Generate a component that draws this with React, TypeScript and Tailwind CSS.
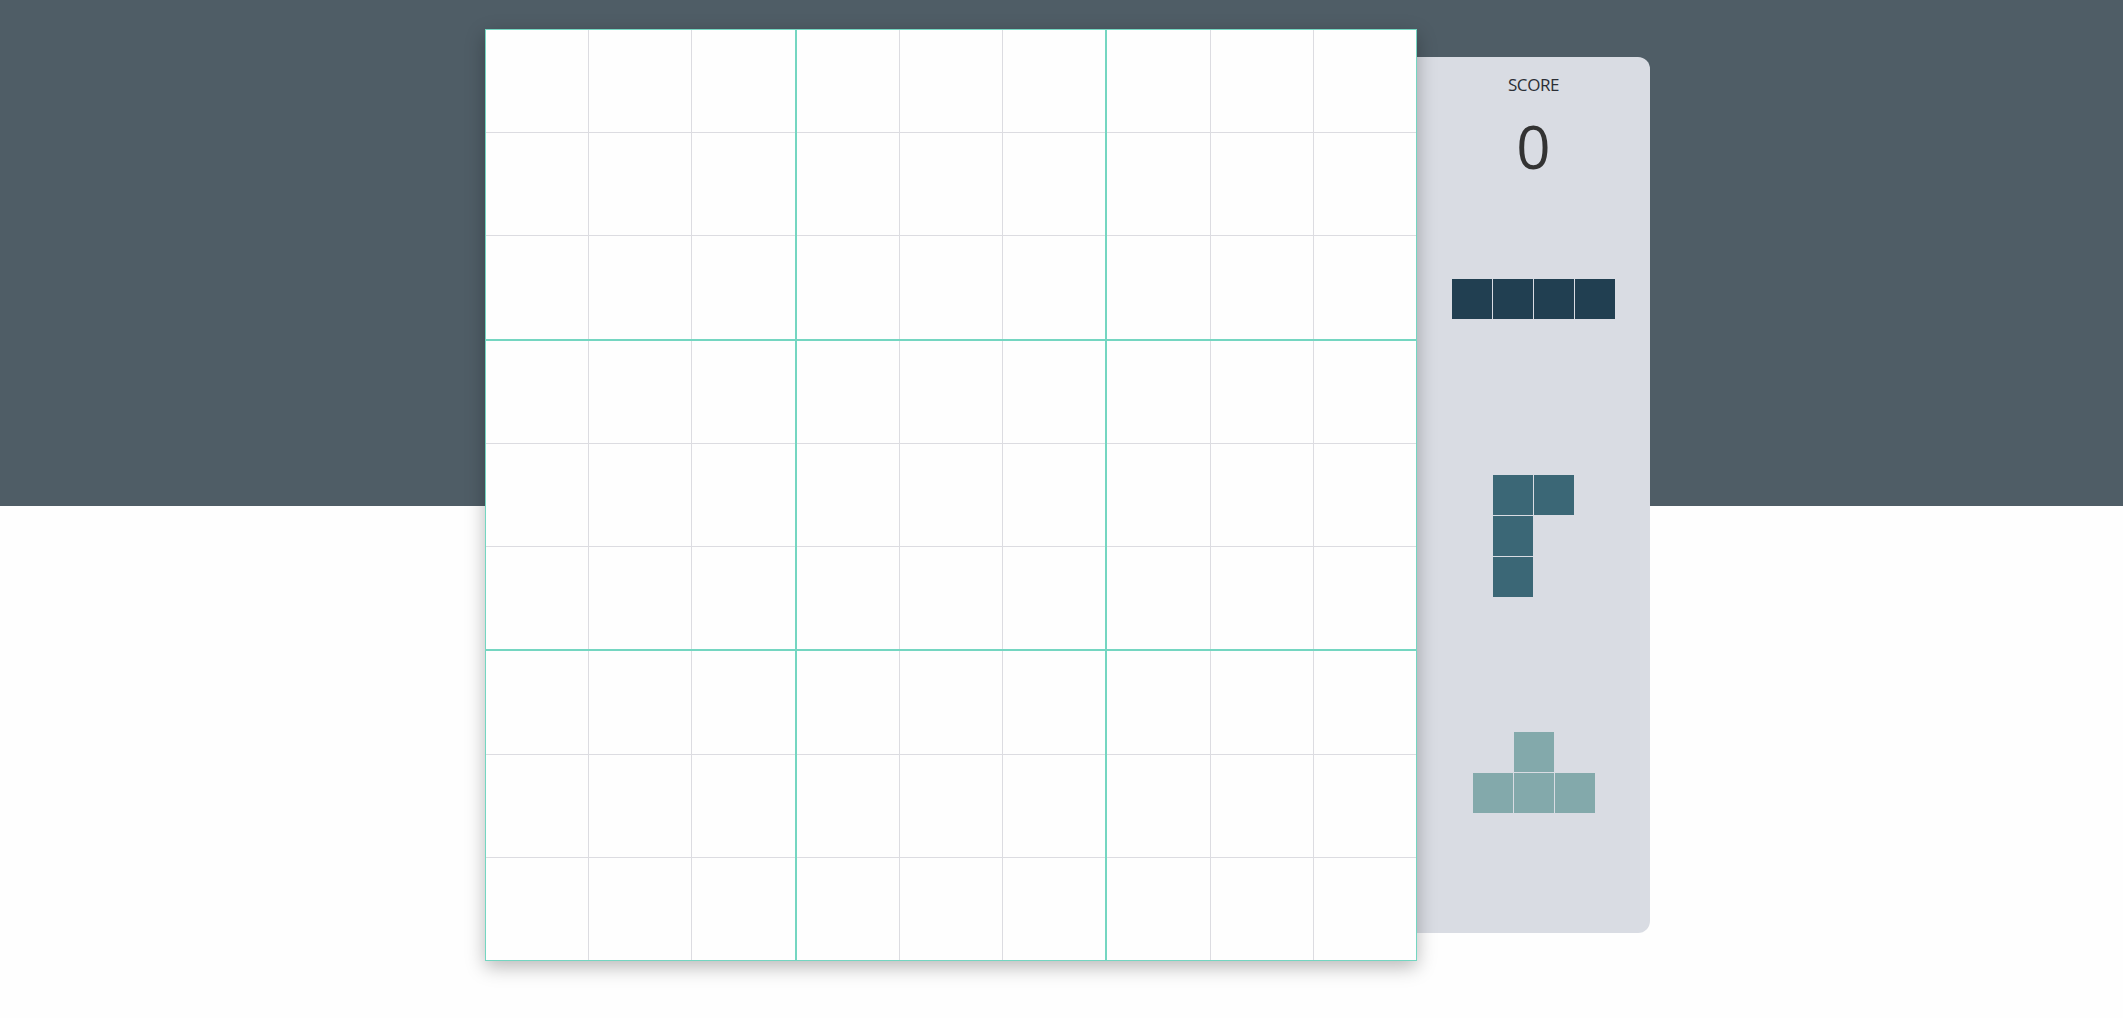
const boxes = [0, 1, 2, 3, 4, 5, 6, 7, 8];
const cells = [0, 1, 2, 3, 4, 5, 6, 7, 8];

type Shape = { color: string; rows: number[][] };

const pieces: Shape[] = [
  { color: "bg-[#213f51]", rows: [[1, 1, 1, 1]] },
  {
    color: "bg-[#3b6776]",
    rows: [
      [1, 1],
      [1, 0],
      [1, 0],
    ],
  },
  {
    color: "bg-[#83a9ab]",
    rows: [
      [0, 1, 0],
      [1, 1, 1],
    ],
  },
];

function Piece({ shape }: { shape: Shape }) {
  return (
    <div className="flex flex-col gap-[1px]">
      {shape.rows.map((row, r) => (
        <div key={r} className="flex gap-[1px]">
          {row.map((on, c) => (
            <div
              key={c}
              className={`w-[40px] h-[40px] ${on ? shape.color : "bg-transparent"}`}
            />
          ))}
        </div>
      ))}
    </div>
  );
}

function Board() {
  return (
    <div className="relative z-10 w-[932px] h-[932px] shrink-0 border border-[#74d6c1] bg-[#74d6c1] shadow-[0_6px_18px_rgba(0,0,0,0.28)]">
      <div className="grid grid-cols-3 grid-rows-3 gap-[2px] w-full h-full">
        {boxes.map((b) => (
          <div key={b} className="grid grid-cols-3 grid-rows-3 gap-[1px] bg-[#dcdce1]">
            {cells.map((c) => (
              <div key={c} className="bg-[#fefefe]" />
            ))}
          </div>
        ))}
      </div>
    </div>
  );
}

export default function App() {
  return (
    <div className="min-h-[1018px] w-full bg-[linear-gradient(#4f5d66_506px,#fefefe_506px)] font-['Open_Sans',sans-serif]">
      <div className="flex items-start pl-[485px] pt-[29px]">
        <Board />
        <div className="mt-[28px] w-[233px] h-[876px] shrink-0 bg-[#d9dce3] rounded-r-[12px] flex flex-col items-center pt-[16px]">
          <div className="text-[17px] leading-[24px] text-[#2b2e35] tracking-tight">SCORE</div>
          <div className="mt-[14px] text-[60px] leading-[70px] text-[#333333] font-normal">0</div>
          <div className="flex flex-col w-full -mt-[1px]">
            {pieces.map((p, i) => (
              <div key={i} className="h-[237px] flex items-center justify-center">
                <Piece shape={p} />
              </div>
            ))}
          </div>
        </div>
      </div>
    </div>
  );
}
